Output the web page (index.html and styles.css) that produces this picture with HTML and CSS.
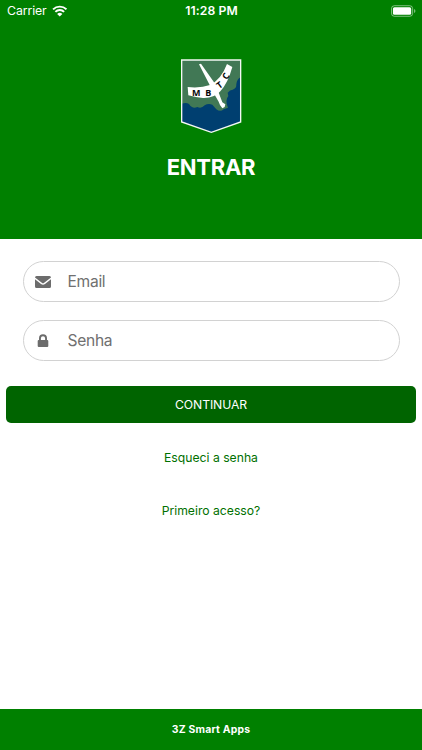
FILE: index.html
```html
<!DOCTYPE html>
<html lang="pt-BR">
<head>
<meta charset="utf-8">
<meta name="viewport" content="width=device-width, initial-scale=1">
<title>Entrar</title>
<link rel="stylesheet" href="styles.css">
</head>
<body>
<div class="screen">
  <header class="hero">
    <div class="status">
      <div class="carrier">
        <span>Carrier</span>
        <svg class="wifi" viewBox="0 0 16 12">
          <path d="M1.1 4.3a9.8 9.8 0 0 1 13.8 0M3.5 6.9a6.4 6.4 0 0 1 9 0" fill="none" stroke="#fff" stroke-width="2"/>
          <path d="M8 11.8 5.3 9a3.9 3.9 0 0 1 5.4 0z" fill="#fff"/>
        </svg>
      </div>
      <span class="clock">11:28 PM</span>
      <svg class="battery" viewBox="0 0 26 12">
        <rect x=".5" y=".5" width="22" height="11" rx="3" fill="none" stroke="#fff" stroke-opacity=".5"/>
        <rect x="2" y="2" width="19" height="8" rx="1.6" fill="#fff"/>
        <path d="M24 4q1.4.6 1.4 2T24 8z" fill="#fff" fill-opacity=".5"/>
      </svg>
    </div>
    <svg class="logo" viewBox="30 24 188 228">
      <path d="M35 30H212V216L124 247 35 216z" fill="#417855"/>
      <path d="M35 161Q49 157 57 162C64 173 73 176 82 171Q94 177 104 166Q115 159 127 164L139 178Q151 187 161 178L174 173Q164 151 175 138L173 128Q180 119 188 119Q200 116 199 103Q201 87 212 82V216L124 247 35 216z" fill="#003f70"/>
      <path d="M35 30H212V216L124 247 35 216z" fill="none" stroke="#f4f8f4" stroke-width="4"/>
      <path d="M87 43 93 41 131 95 140 112 157 157 166 163 164 171 157 175 150 165 146 155 124 117 119 105z" fill="#fff"/>
      <path d="M53 111Q92 115 120 105Q154 88 171 42L187 51Q174 99 151 124Q133 145 99 144Q78 143 55 136z" fill="#fff"/>
      <g class="logo-text">
        <text x="79" y="137">M</text>
        <text x="115" y="137">B</text>
        <text x="0" y="9" transform="translate(149 106) rotate(-36)">T</text>
        <text x="0" y="9" transform="translate(168 79) rotate(-58)">C</text>
      </g>
    </svg>
    <h1>ENTRAR</h1>
  </header>
  <main>
    <form class="form">
      <label class="field">
        <svg class="icon" viewBox="0 0 16 14"><path d="M1.5 1h13Q16 1 16 2.5L9.2 7.8Q8 8.8 6.8 7.8L0 2.5Q0 1 1.5 1zM0 4.3l6 4.8q2 1.5 4 0l6-4.8v7.2q0 1.5-1.5 1.5h-13Q0 13 0 11.5z"/></svg>
        <input type="email" placeholder="Email">
      </label>
      <label class="field">
        <svg class="icon" viewBox="0 0 16 14"><path d="M4 6V4.3a4 4 0 0 1 8 0V6h.2q1.1 0 1.1 1.1v4.8q0 1.1-1.1 1.1H3.8q-1.1 0-1.1-1.1V7.1Q2.7 6 3.8 6zM5.9 6h4.2V4.300a2.100 2.100 0 0 0-4.200 0z"/></svg>
        <input type="password" placeholder="Senha">
      </label>
    </form>
    <button class="submit" type="button">CONTINUAR</button>
    <a class="link">Esqueci a senha</a>
    <a class="link first-access">Primeiro acesso?</a>
  </main>
  <footer>3Z Smart Apps</footer>
</div>
</body>
</html>
```
FILE: styles.css
```css
* { box-sizing: border-box; }
body { margin: 0; background: #fff; font-family: Inter, sans-serif; }
.screen { height: 750px; display: flex; flex-direction: column; }
.hero { height: 239px; background: #008000; color: #fff; display: flex; flex-direction: column; align-items: center; }
.status { width: 100%; height: 22px; padding: 0 6px 0 7px; display: grid; grid-template-columns: 1fr auto 1fr; align-items: center; font-size: 12.3px; line-height: 22px; }
.carrier { display: flex; align-items: center; gap: 5px; letter-spacing: -.1px; }
.wifi { width: 15.5px; height: 12px; }
.clock { font-weight: 600; font-size: 12.2px; letter-spacing: .1px; }
.battery { width: 25px; height: 12px; justify-self: end; }
.logo { width: 62.67px; height: 76px; margin-top: 36px; flex: none; }
.logo-text { font: 700 27px "Open Sans", sans-serif; text-anchor: middle; fill: #080808; }
h1 { margin: 18px 0 0; font-size: 22px; line-height: 30px; font-weight: 700; letter-spacing: -.25px; }
main { flex: 1; display: flex; flex-direction: column; align-items: center; }
.form { width: 100%; padding: 22px 22.5px 0; display: grid; gap: 18px; }
.field { height: 41px; border: 1px solid #d2d2d2; border-radius: 21px; display: flex; align-items: center; padding-left: 11px; }
.icon { width: 16px; height: 14px; fill: #6c6c6c; flex: none; }
.field input { min-width: 0; flex: 1; margin: 0 16px 0 17px; padding: 0; border: 0; outline: 0; background: transparent; font: 400 15.6px Inter, sans-serif; letter-spacing: -.3px; }
.field input::placeholder { color: #707070; opacity: 1; }
.submit { width: 410px; height: 37px; margin: 25px 0 0; padding: 0; border: 0; border-radius: 5px; background: #006400; color: #fff; font: 400 12.2px/37px Inter, sans-serif; letter-spacing: -.1px; }
.link { margin-top: 25px; color: #007000; font-size: 12.2px; line-height: 20px; letter-spacing: 0; }
.first-access { margin-top: 33px; }
footer { height: 41px; background: #008000; color: #fff; text-align: center; font-size: 10.4px; line-height: 41px; font-weight: 700; letter-spacing: .2px; }
```
